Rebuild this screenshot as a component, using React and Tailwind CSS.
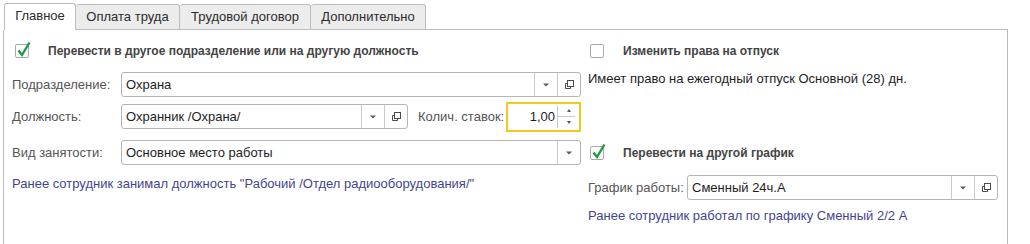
import React from "react";

const Arrow = () => (
  <svg width="6" height="4" viewBox="0 0 6 4"><path d="M0 0.5h6L3 3.5z" fill="#5a5a5a" /></svg>
);

const CopyIcon = () => (
  <svg width="11" height="11" viewBox="0 0 11 11" fill="none" stroke="#4a4a4a" strokeWidth="1">
    <rect x="3.5" y="1.5" width="6" height="6" />
    <path d="M3.5 4.5H1.5V9.5H6.5V7.5" />
  </svg>
);

const Check = ({ checked }) => (
  <div className="relative w-[14px] h-[14px] border border-[#a9a9a9] rounded-[2px] bg-white shrink-0">
    {checked && (
      <svg className="absolute left-[1px] top-[-4px]" width="14" height="17" viewBox="0 0 14 17">
        <path d="M1.5 9.5L5 14L12.5 1.5" fill="none" stroke="#1f9a45" strokeWidth="2.4" strokeLinejoin="miter" />
      </svg>
    )}
  </div>
);

const Field = ({ value, width, copy = true, className = "" }) => (
  <div className={`flex h-[25px] border border-[#b5b5b5] rounded-[3px] bg-white ${width || "flex-1"} ${className}`}>
    <div className="flex-1 flex items-center pl-[4px] text-[#1e1e1e] whitespace-nowrap overflow-hidden">{value}</div>
    <div className="w-[23px] border-l border-[#c8c8c8] flex items-center justify-center"><Arrow /></div>
    {copy && (
      <div className="w-[23px] border-l border-[#c8c8c8] flex items-center justify-center"><CopyIcon /></div>
    )}
  </div>
);

const Tab = ({ children, active, w }) =>
  active ? (
    <div className={`${w} h-[27px] border-l border-t border-r border-[#bcbcbc] rounded-t-[3px] bg-white flex items-center justify-center pb-[2px] text-[#2b2b2b]`}>
      {children}
    </div>
  ) : (
    <div className={`${w} h-[26px] border-t border-r border-b border-[#bcbcbc] rounded-t-[3px] bg-[#ececec] flex items-center justify-center text-[#2b2b2b]`}>
      {children}
    </div>
  );

export default function App() {
  return (
    <div className="w-[1030px] h-[244px] bg-white overflow-hidden text-[13px] leading-[16px]" style={{ fontFamily: '"Liberation Sans", Arial, sans-serif' }}>
      <div className="flex items-end h-[30px] w-[1008px] pl-[4px]">
        <Tab active w="w-[72px]">Главное</Tab>
        <Tab w="w-[104px]">Оплата труда</Tab>
        <Tab w="w-[131px]">Трудовой договор</Tab>
        <Tab w="w-[115px]">Дополнительно</Tab>
        <div className="flex-1 border-b border-[#bcbcbc]" />
      </div>
      <div className="ml-[3px] w-[1005px] h-[214px] border-l border-r border-[#bcbcbc] pl-[8px] flex">
        {/* left column */}
        <div className="w-[569px] flex flex-col">
          <div className="mt-[13px] h-[16px] flex items-center">
            <div className="ml-[3px]"><Check checked /></div>
            <span className="ml-[19px] font-bold text-[12px] text-[#444444]">Перевести в другое подразделение или на другую должность</span>
          </div>
          <div className="mt-[13px] h-[25px] flex items-center">
            <div className="w-[109px] text-[#555555]">Подразделение:</div>
            <Field value="Охрана" />
          </div>
          <div className="mt-[7px] h-[25px] flex items-center">
            <div className="w-[109px] text-[#555555]">Должность:</div>
            <Field value="Охранник /Охрана/" width="w-[287px]" />
            <div className="ml-[10px] w-[88px] text-[#555555] whitespace-nowrap">Колич. ставок:</div>
            <div className="flex-1 h-[30px] border-2 border-[#f4c620] flex items-center">
              <div className="flex-1 text-right pr-[2px] text-[#1e1e1e]">1,00</div>
              <div className="w-[22px] h-[22px] border-l border-[#c8c8c8] flex flex-col">
                <div className="flex-1 flex items-center justify-center">
                  <svg width="4" height="3" viewBox="0 0 4 3"><path d="M0 3h4L2 0z" fill="#555" /></svg>
                </div>
                <div className="h-px bg-[#c8c8c8] mr-[4px]" />
                <div className="flex-1 flex items-center justify-center">
                  <svg width="4" height="3" viewBox="0 0 4 3"><path d="M0 0h4L2 3z" fill="#555" /></svg>
                </div>
              </div>
            </div>
          </div>
          <div className="mt-[11px] h-[25px] flex items-center">
            <div className="w-[109px] text-[#555555]">Вид занятости:</div>
            <Field value="Основное место работы" copy={false} />
          </div>
          <div className="mt-[11px] text-[#45458e]">Ранее сотрудник занимал должность "Рабочий /Отдел радиооборудования/"</div>
        </div>
        {/* right column */}
        <div className="ml-[7px] w-[410px] flex flex-col">
          <div className="mt-[13px] h-[16px] flex items-center">
            <div className="ml-[2px]"><Check /></div>
            <span className="ml-[19px] font-bold text-[12px] text-[#444444]">Изменить права на отпуск</span>
          </div>
          <div className="mt-[12px] text-[#1e1e1e]">Имеет право на ежегодный отпуск Основной (28) дн.</div>
          <div className="mt-[58px] h-[16px] flex items-center">
            <div className="ml-[2px]"><Check checked /></div>
            <span className="ml-[19px] font-bold text-[12px] text-[#444444]">Перевести на другой график</span>
          </div>
          <div className="mt-[14px] h-[25px] flex items-center">
            <div className="w-[99px] text-[#555555]">График работы:</div>
            <Field value="Сменный 24ч.А" />
          </div>
          <div className="mt-[8px] text-[#45458e]">Ранее сотрудник работал по графику Сменный 2/2 А</div>
        </div>
      </div>
    </div>
  );
}
